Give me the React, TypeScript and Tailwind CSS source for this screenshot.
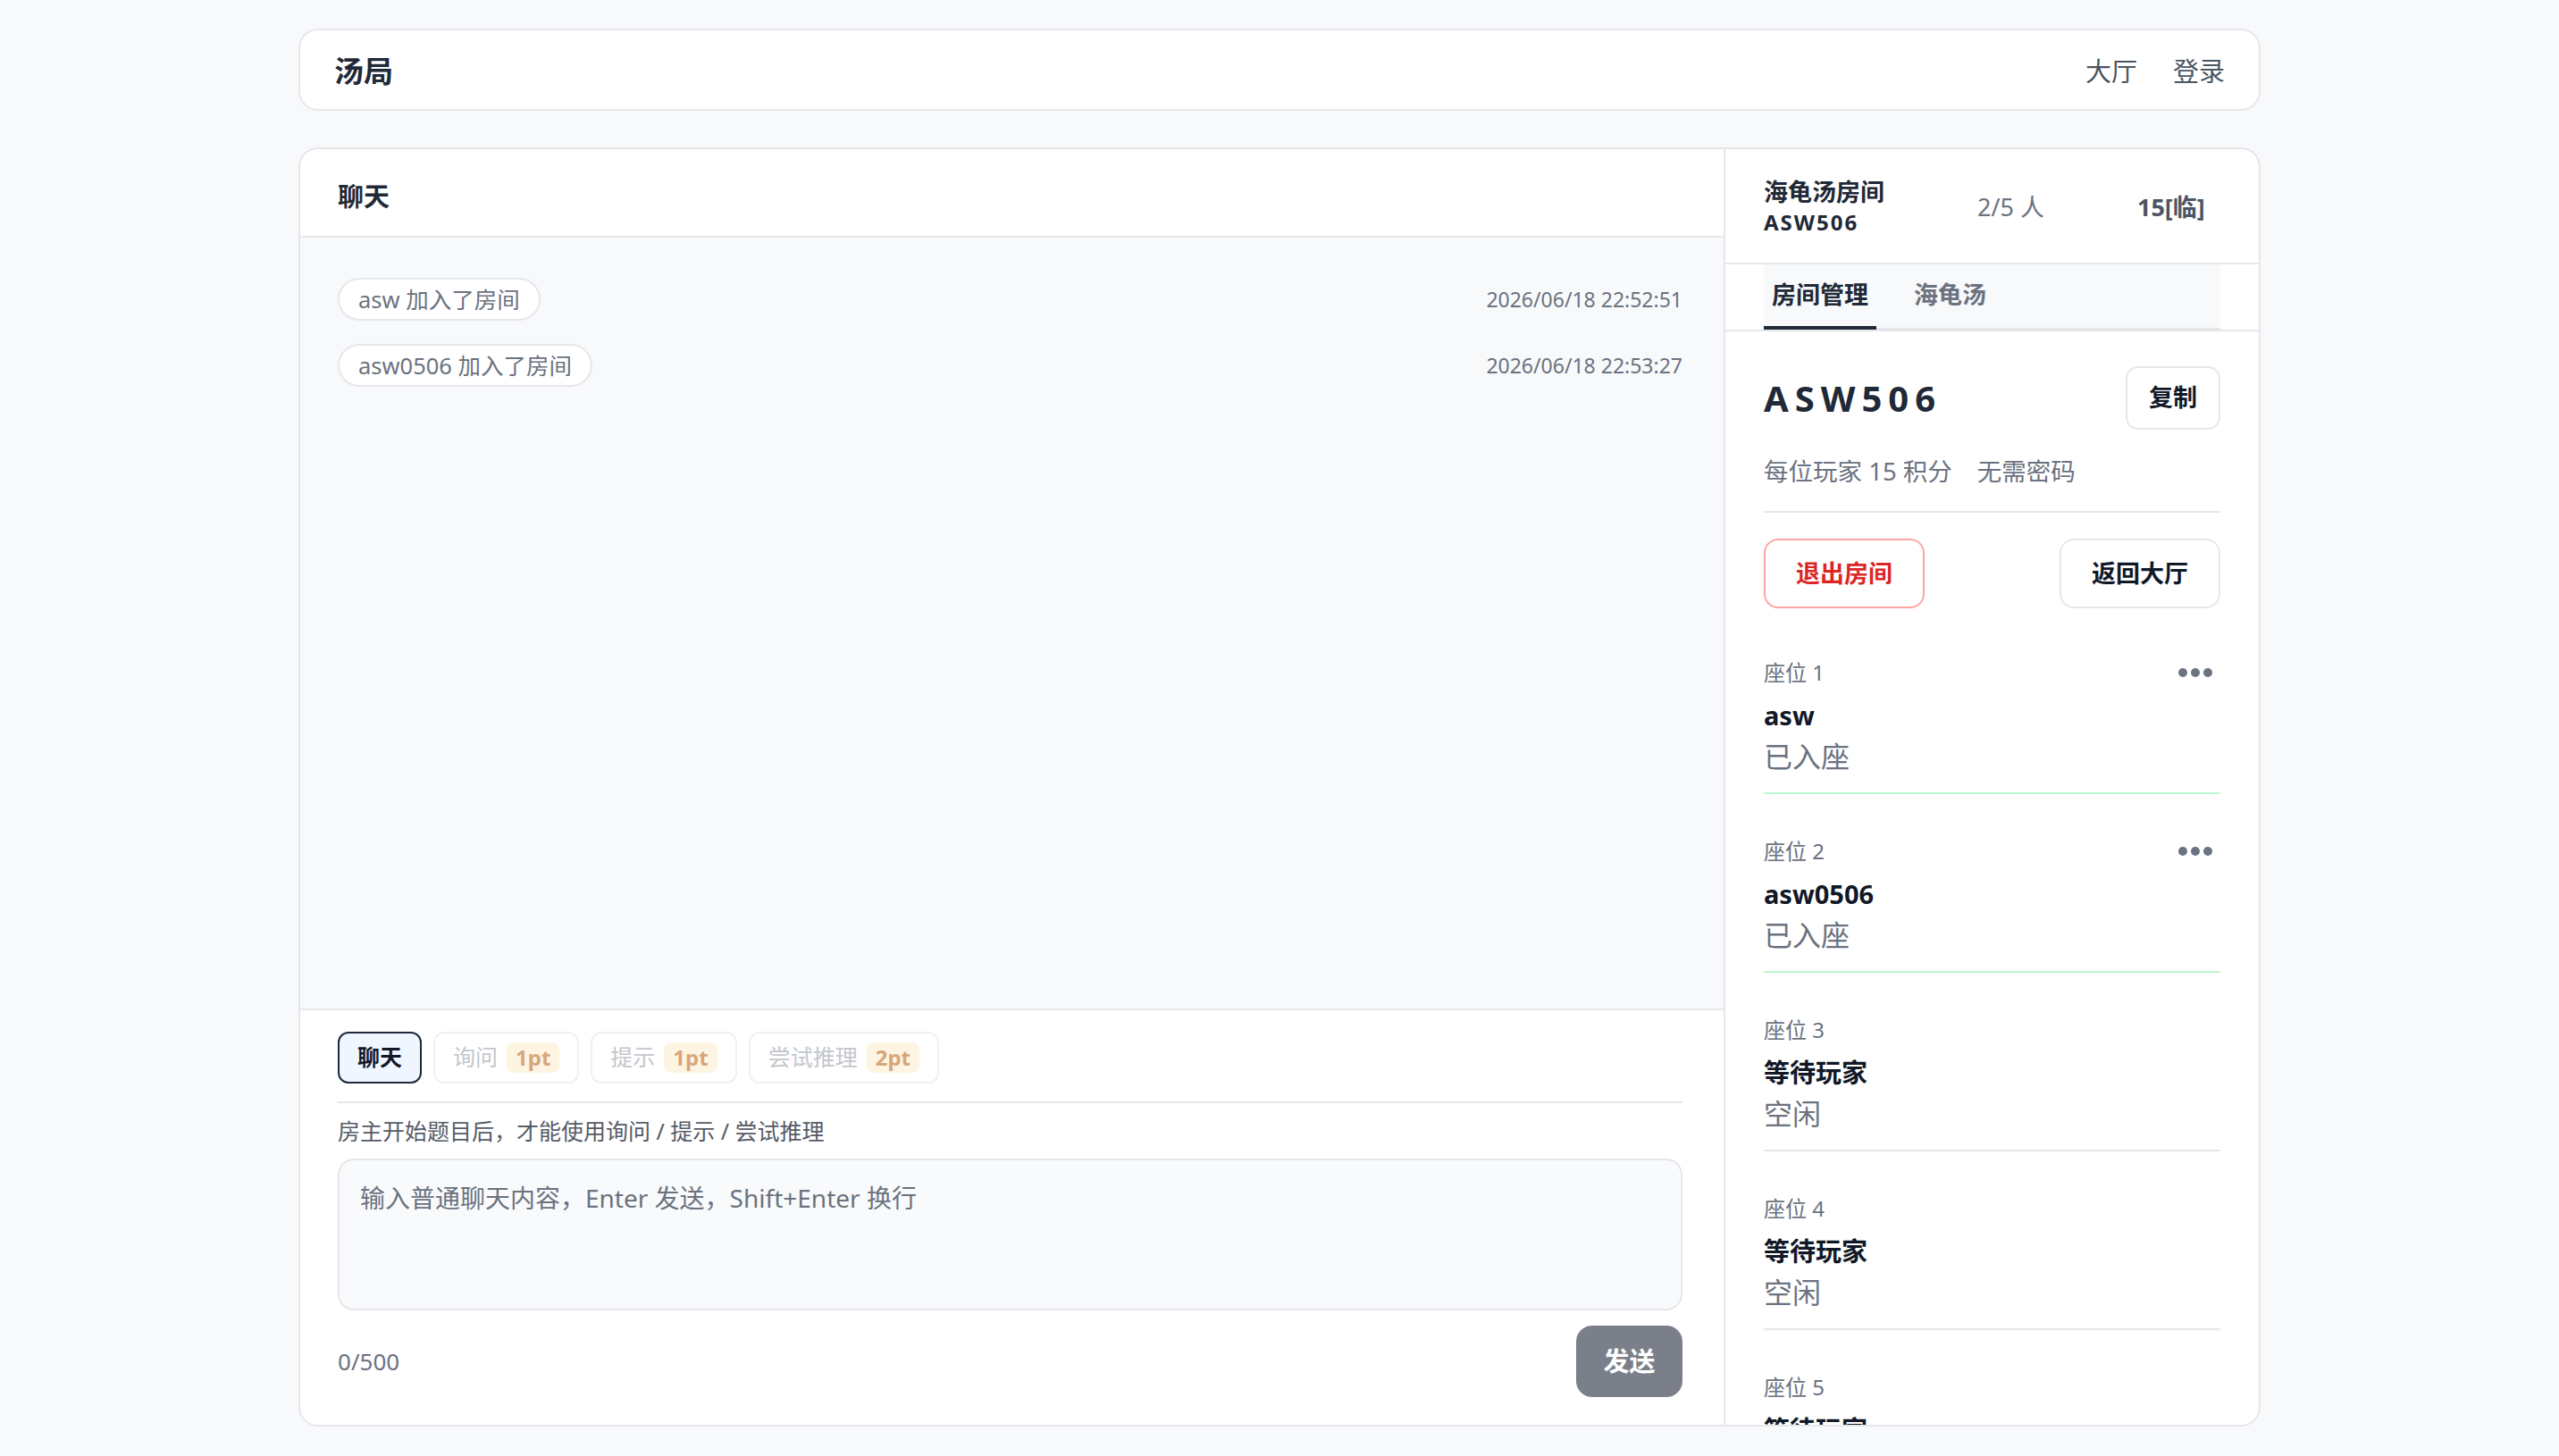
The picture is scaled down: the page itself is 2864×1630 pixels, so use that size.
import { useState } from "react";

type Seat = {
  no: number;
  name: string;
  status: string;
  taken: boolean;
};

const seats: Seat[] = [
  { no: 1, name: "asw", status: "已入座", taken: true },
  { no: 2, name: "asw0506", status: "已入座", taken: true },
  { no: 3, name: "等待玩家", status: "空闲", taken: false },
  { no: 4, name: "等待玩家", status: "空闲", taken: false },
  { no: 5, name: "等待玩家", status: "空闲", taken: false },
];

const messages = [
  { text: "asw 加入了房间", time: "2026/06/18 22:52:51" },
  { text: "asw0506 加入了房间", time: "2026/06/18 22:53:27" },
];

const modes = [
  { key: "chat", label: "聊天", cost: "" },
  { key: "ask", label: "询问", cost: "1pt" },
  { key: "hint", label: "提示", cost: "1pt" },
  { key: "guess", label: "尝试推理", cost: "2pt" },
];

const Dots = () => (
  <button className="flex items-center gap-[4px] px-[9px] py-[4px]">
    <span className="h-[10px] w-[10px] rounded-full bg-[#6b7280]" />
    <span className="h-[10px] w-[10px] rounded-full bg-[#6b7280]" />
    <span className="h-[10px] w-[10px] rounded-full bg-[#6b7280]" />
  </button>
);

const App = () => {
  const [mode, setMode] = useState("chat");
  const [tab, setTab] = useState("room");
  const [text, setText] = useState("");

  return (
    <div className="min-h-[1630px] bg-[#f8f9fb] font-['Noto_Sans','Noto_Sans_CJK_SC',sans-serif] text-[#1f2937]">
      <div className="mx-auto w-[2196px] pt-[32px]">
        {/* Header */}
        <header className="flex h-[92px] items-center justify-between rounded-[22px] border-2 border-[#e5e7eb] bg-white px-[38px] pt-[3px]">
          <div className="text-[33px] font-bold leading-none">汤局</div>
          <nav className="flex gap-[40px] text-[29px] text-[#4b5563]">
            <a>大厅</a>
            <a>登录</a>
          </nav>
        </header>

        <main className="mt-[41px] flex h-[1432px] overflow-hidden rounded-[22px] border-2 border-[#e5e7eb] bg-white">
          {/* Chat column */}
          <section className="flex min-w-0 flex-1 flex-col">
            <div className="flex h-[99px] shrink-0 items-center border-b-2 border-[#e5e7eb] px-[42px] pt-[8px] text-[29px] font-bold">
              聊天
            </div>

            <div className="flex flex-1 flex-col gap-[26px] bg-[#f8f9fb] pt-[45px] pr-[46px] pl-[42px]">
              {messages.map((m) => (
                <div key={m.time} className="flex items-center justify-between">
                  <span className="flex h-[48px] items-center rounded-full border-2 border-[#e5e7eb] bg-white px-[21px] text-[25.5px] text-[#6b7280]">
                    {m.text}
                  </span>
                  <span className="text-[23px] text-[#6b7280]">{m.time}</span>
                </div>
              ))}
            </div>

            {/* Composer */}
            <div className="shrink-0 border-t-2 border-[#e5e7eb] pt-[24px] pr-[46px] pb-[31px] pl-[42px]">
              <div className="flex gap-[13px] border-b-2 border-[#e5e7eb] pb-[20px]">
                {modes.map((m) => {
                  const active = m.key === mode;
                  const disabled = m.key !== "chat";
                  return (
                    <button
                      key={m.key}
                      onClick={() => !disabled && setMode(m.key)}
                      className={
                        active
                          ? "flex h-[58px] items-center rounded-[12px] border-2 border-[#1e293b] bg-[#eff6ff] px-[20px] text-[25px] font-bold text-[#111827]"
                          : "flex h-[58px] items-center gap-[10px] rounded-[12px] border-2 border-[#f0f1f3] bg-white px-[20px] text-[25px] text-[#c3c7cd]"
                      }
                    >
                      {m.label}
                      {m.cost && (
                        <span className="flex h-[34px] items-center rounded-[8px] bg-[#fdf5e2] px-[10px] text-[24px] font-bold text-[#d8a67c]">
                          {m.cost}
                        </span>
                      )}
                    </button>
                  );
                })}
              </div>

              <p className="mt-[14px] text-[25px] leading-[34px] text-[#555b66]">
                房主开始题目后，才能使用询问 / 提示 / 尝试推理
              </p>

              <textarea
                value={text}
                onChange={(e) => setText(e.target.value)}
                placeholder="输入普通聊天内容，Enter 发送，Shift+Enter 换行"
                className="mt-[14px] block h-[170px] w-full resize-none rounded-[18px] border-2 border-[#e5e7eb] bg-[#f9fafb] px-[23px] py-[20px] text-[28px] leading-[44px] outline-none placeholder:text-[#6b7280]"
              />

              <div className="mt-[17px] flex items-center justify-between">
                <span className="text-[26px] text-[#6b7280]">{text.length}/500</span>
                <button className="h-[80px] w-[119px] rounded-[18px] bg-[#7b7f8a] text-[29px] font-bold text-white">
                  发送
                </button>
              </div>
            </div>
          </section>

          {/* Room column */}
          <aside className="flex w-[599px] shrink-0 flex-col overflow-hidden border-l-2 border-[#e5e7eb]">
            <div className="flex h-[129px] shrink-0 items-center gap-[104px] border-b-2 border-[#e5e7eb] px-[43px]">
              <div>
                <div className="text-[27px] font-bold leading-[36px]">海龟汤房间</div>
                <div className="text-[24px] font-bold leading-[32px] tracking-[2px]">ASW506</div>
              </div>
              <span className="pt-[3px] text-[27px] text-[#6b7280]">2/5 人</span>
              <span className="pt-[3px] text-[27px] font-bold text-[#4b5563]">15[临]</span>
            </div>

            <div className="shrink-0 border-b-2 border-[#e5e7eb] px-[43px]">
              <div className="flex h-[73px] gap-[33px] border-b-2 border-[#e5e7eb] bg-[#f8f9fb]">
                <button
                  onClick={() => setTab("room")}
                  className={`-mb-[2px] border-b-4 px-[9px] text-[27px] font-bold ${
                    tab === "room" ? "border-[#1f2937] text-[#1f2937]" : "border-transparent text-[#6b7280]"
                  }`}
                >
                  房间管理
                </button>
                <button
                  onClick={() => setTab("soup")}
                  className={`-mb-[2px] border-b-4 px-[9px] text-[27px] font-bold ${
                    tab === "soup" ? "border-[#1f2937] text-[#1f2937]" : "border-transparent text-[#6b7280]"
                  }`}
                >
                  海龟汤
                </button>
              </div>
            </div>

            <div className="px-[43px] pt-[39px]">
              <div className="flex items-center justify-between">
                <div className="text-[40px] font-bold tracking-[7px] text-[#1f2937]">ASW506</div>
                <button className="h-[71px] w-[106px] rounded-[14px] border-2 border-[#e5e7eb] bg-white text-[27px] font-bold text-[#111827]">
                  复制
                </button>
              </div>

              <div className="mt-[28px] flex gap-[28px] border-b-2 border-[#e5e7eb] pb-[25px] text-[27.5px] leading-[38px] text-[#6b7280]">
                <span>每位玩家 15 积分</span>
                <span>无需密码</span>
              </div>

              <div className="mt-[29px] flex justify-between">
                <button className="h-[78px] w-[180px] rounded-[16px] border-2 border-[#fca5a5] bg-white text-[27px] font-bold text-[#dc2626]">
                  退出房间
                </button>
                <button className="h-[78px] w-[180px] rounded-[16px] border-2 border-[#e5e7eb] bg-white text-[27px] font-bold text-[#111827]">
                  返回大厅
                </button>
              </div>

              <div className="mt-[8px]">
                {seats.map((s) => (
                  <div
                    key={s.no}
                    className={`border-b-2 pt-[46px] pb-[18px] ${s.taken ? "border-[#bbf7d0]" : "border-[#e5e7eb]"}`}
                  >
                    <div className="flex h-[36px] items-center justify-between">
                      <span className="text-[24px] text-[#6b7280]">座位 {s.no}</span>
                      {s.taken && <Dots />}
                    </div>
                    <div className="mt-[8px] text-[29px] font-bold leading-[44px] text-[#111827]">{s.name}</div>
                    <div className="mt-[2px] text-[32px] leading-[44px] text-[#6b7280]">{s.status}</div>
                  </div>
                ))}
              </div>
            </div>
          </aside>
        </main>
      </div>
    </div>
  );
};

export default App;
